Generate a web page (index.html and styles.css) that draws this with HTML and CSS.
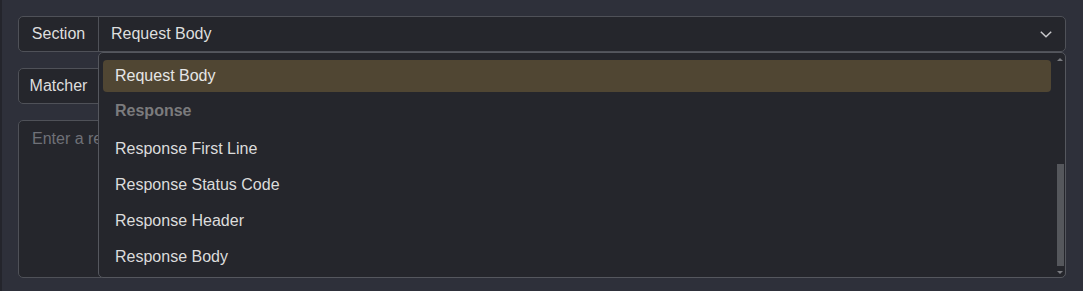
FILE: index.html
```html
<!DOCTYPE html>
<html lang="en">
<head>
<meta charset="utf-8">
<title>Section picker</title>
<link rel="stylesheet" href="styles.css">
</head>
<body>
<div class="form">
  <div class="group section-group">
    <span class="label">Section</span>
    <div class="select">
      <span class="value">Request Body</span>
      <svg class="chevron" width="12" height="7" viewBox="0 0 12 7"><path d="M0.8 0.8 L6 5.8 L11.2 0.8" fill="none" stroke="#c9c9cc" stroke-width="1.5"/></svg>
    </div>
    <div class="dropdown">
      <ul class="options">
        <li class="option active">Request Body</li>
        <li class="option header">Response</li>
        <li class="option">Response First Line</li>
        <li class="option">Response Status Code</li>
        <li class="option">Response Header</li>
        <li class="option">Response Body</li>
      </ul>
      <div class="scrollbar">
        <div class="sb-btn up"><span class="tri-up"></span></div>
        <div class="sb-track"><div class="sb-thumb"></div></div>
        <div class="sb-btn down"><span class="tri-down"></span></div>
      </div>
    </div>
  </div>
  <div class="group">
    <span class="label">Matcher</span>
    <div class="select"></div>
  </div>
  <textarea class="input-area" placeholder="Enter a regular expression"></textarea>
</div>
</body>
</html>
```

FILE: styles.css
```css
html, body {
  height: 100%;
}
body {
  margin: 0;
  box-sizing: border-box;
  background: #2e303a;
  border-left: 2px solid #24252c;
  padding: 16px 17px 0 16px;
  font-family: "Liberation Sans", Arial, sans-serif;
  font-size: 16px;
  color: #dedede;
}
.form {
  display: flex;
  flex-direction: column;
  gap: 16px;
}
.group {
  display: flex;
  height: 36px;
  box-sizing: border-box;
  border: 1px solid #4f5158;
  border-radius: 5px;
  background: #25262c;
}
.section-group {
  position: relative;
}
.label {
  width: 79px;
  flex: none;
  display: flex;
  align-items: center;
  justify-content: center;
  border-right: 1px solid #4f5158;
}
.select {
  flex: 1;
  display: flex;
  align-items: center;
  justify-content: space-between;
  padding: 0 13px 0 12px;
}
.chevron {
  display: block;
}
.input-area {
  height: 158px;
  box-sizing: border-box;
  border: 1px solid #4f5158;
  border-radius: 5px;
  background: #25262c;
  padding: 9px 13px;
  font-family: "Liberation Sans", Arial, sans-serif;
  font-size: 16px;
  color: #dedede;
  resize: none;
  outline: none;
}
.input-area::placeholder {
  color: #6f7178;
}
.dropdown {
  position: absolute;
  top: 35px;
  left: 79px;
  right: -1px;
  height: 226px;
  box-sizing: border-box;
  border: 1px solid #55575e;
  border-radius: 5px;
  background: #25262c;
  display: flex;
  overflow: hidden;
  z-index: 2;
}
.options {
  list-style: none;
  margin: 0;
  flex: 1;
  padding: 7px 4px 0 4px;
  display: flex;
  flex-direction: column;
  gap: 4px;
}
.option {
  height: 32px;
  flex: none;
  box-sizing: border-box;
  display: flex;
  align-items: center;
  padding: 0 12px;
  border-radius: 4px;
  color: #dcdcdc;
}
.option.active {
  background: #504633;
  color: #e6e6e6;
}
.option.header {
  color: #7b7b7d;
  font-weight: bold;
  height: 33px;
  padding-bottom: 3px;
}
.scrollbar {
  width: 10px;
  flex: none;
  display: flex;
  flex-direction: column;
}
.sb-btn {
  flex: none;
  display: flex;
  justify-content: center;
  box-sizing: border-box;
}
.sb-btn.up {
  height: 9px;
  align-items: flex-end;
  padding-bottom: 1px;
}
.sb-btn.down {
  height: 11px;
  align-items: flex-start;
  padding-top: 5px;
}
.tri-up {
  width: 0;
  height: 0;
  border-left: 3px solid transparent;
  border-right: 3px solid transparent;
  border-bottom: 3px solid #7a7b80;
}
.tri-down {
  width: 0;
  height: 0;
  border-left: 3px solid transparent;
  border-right: 3px solid transparent;
  border-top: 3px solid #7a7b80;
}
.sb-track {
  flex: 1;
  display: flex;
  flex-direction: column;
  justify-content: flex-end;
  align-items: center;
}
.sb-thumb {
  width: 7px;
  height: 102px;
  background: #55575c;
}
```
